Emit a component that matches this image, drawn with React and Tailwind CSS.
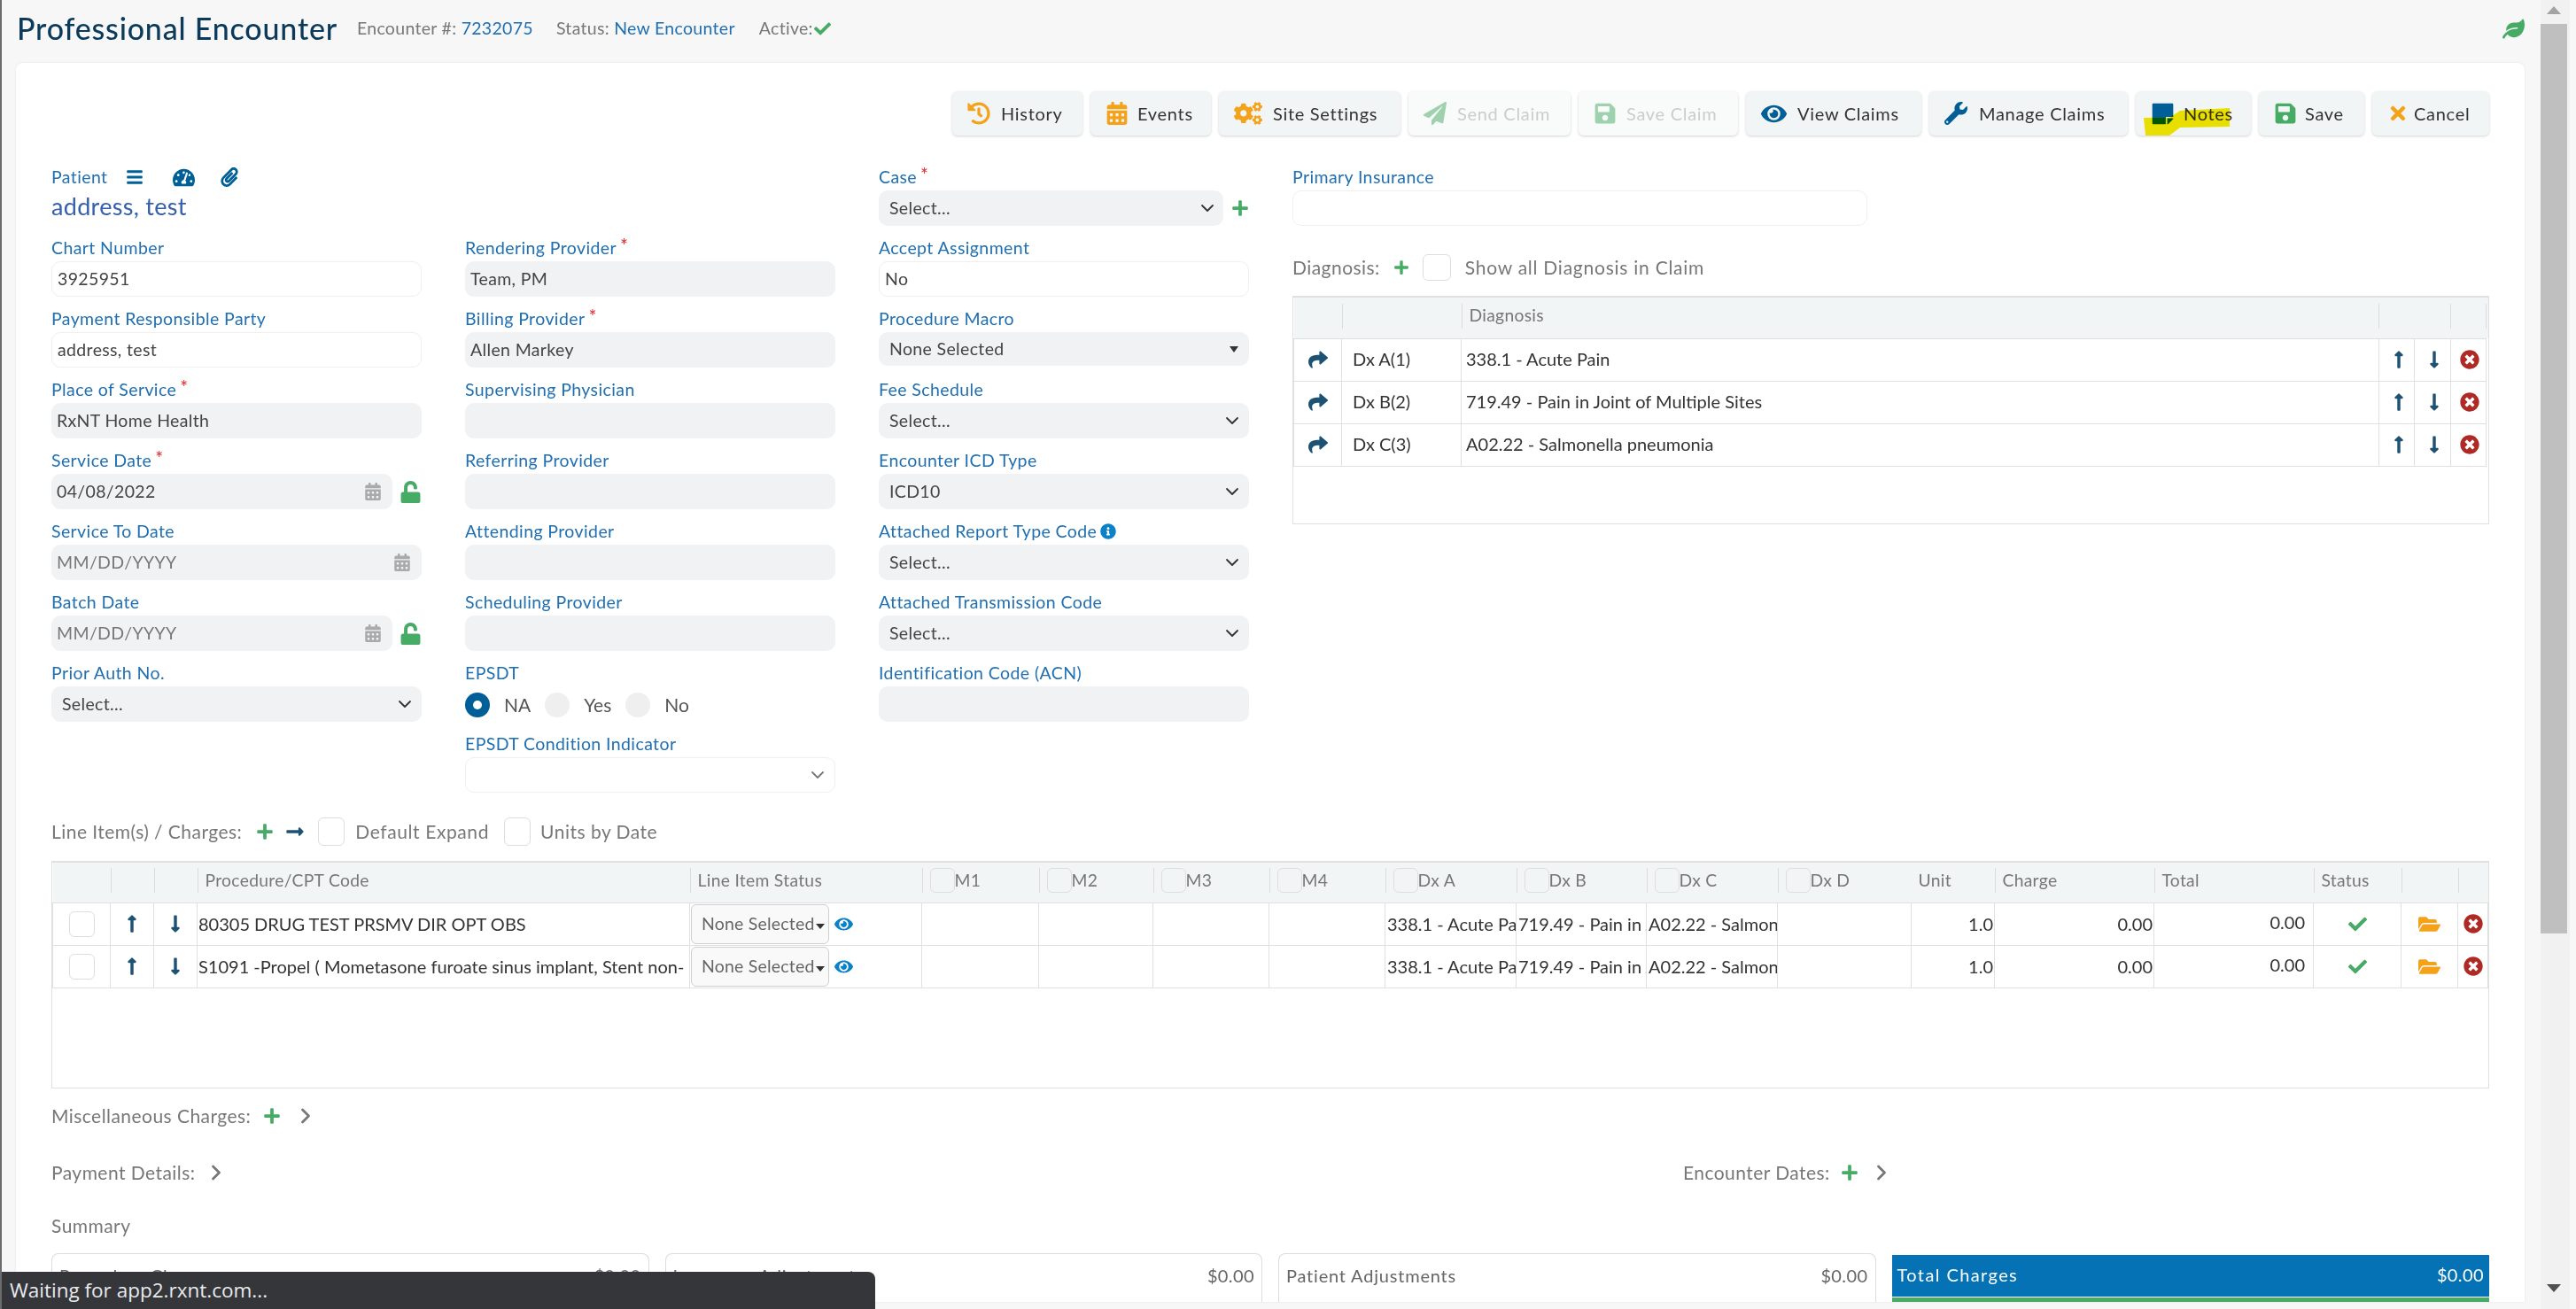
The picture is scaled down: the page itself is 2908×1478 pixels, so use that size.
import {
  FaBars,
  FaCalendarAlt,
  FaCheck,
  FaCogs,
  FaEye,
  FaFolderOpen,
  FaHistory,
  FaInfoCircle,
  FaLeaf,
  FaLongArrowAltDown,
  FaLongArrowAltRight,
  FaLongArrowAltUp,
  FaPaperPlane,
  FaPaperclip,
  FaPlus,
  FaSave,
  FaShare,
  FaStickyNote,
  FaTachometerAlt,
  FaTimes,
  FaTimesCircle,
  FaUnlock,
  FaWrench,
} from "react-icons/fa";
import { ChevronDown, ChevronRight } from "lucide-react";

const toolbar = [
  { label: "History", icon: FaHistory, color: "text-[#f5a21b]", width: "w-[147px]", size: 26, gap: "gap-[12px]" },
  { label: "Events", icon: FaCalendarAlt, color: "text-[#f5a21b]", width: "w-[136px]", size: 26, gap: "gap-[10px]" },
  { label: "Site Settings", icon: FaCogs, color: "text-[#f5a21b]", width: "w-[205px]", size: 32, gap: "gap-[12px]" },
  { label: "Send Claim", icon: FaPaperPlane, color: "text-[#46ab64]", width: "w-[183px]", size: 26, gap: "gap-[12px]", disabled: true },
  { label: "Save Claim", icon: FaSave, color: "text-[#46ab64]", width: "w-[180px]", size: 26, gap: "gap-[11px]", disabled: true },
  { label: "View Claims", icon: FaEye, color: "text-[#005f96]", width: "w-[198px]", size: 29, gap: "gap-[12px]" },
  { label: "Manage Claims", icon: FaWrench, color: "text-[#005f96]", width: "w-[224px]", size: 26, gap: "gap-[13px]" },
  { label: "Notes", icon: FaStickyNote, color: "text-[#005f96]", width: "w-[130px]", size: 27, gap: "gap-[10px]", marker: true },
  { label: "Save", icon: FaSave, color: "text-[#46ab64]", width: "w-[119px]", size: 26, gap: "gap-[9px]" },
  { label: "Cancel", icon: FaTimes, color: "text-[#f5a21b]", width: "w-[132px]", size: 24, gap: "gap-[6px]" },
];

const lineCols = [65, 49, 49, 556, 262, 132, 129, 131, 131, 148, 147, 148, 151, 94, 180, 180, 99, 64, 34];

const lineHead = [
  { text: "", noLine: true },
  { text: "" },
  { text: "" },
  { text: "Procedure/CPT Code" },
  { text: "Line Item Status" },
  { text: "M1", box: true },
  { text: "M2", box: true },
  { text: "M3", box: true },
  { text: "M4", box: true },
  { text: "Dx A", box: true },
  { text: "Dx B", box: true },
  { text: "Dx C", box: true },
  { text: "Dx D", box: true },
  { text: "Unit", noLine: true },
  { text: "Charge" },
  { text: "Total" },
  { text: "Status" },
  { text: "" },
  { text: "" },
];

const lines = [
  { code: "80305 DRUG TEST PRSMV DIR OPT OBS" },
  { code: "S1091 -Propel ( Mometasone furoate sinus implant, Stent non-" },
];

const diagnoses = [
  { dx: "Dx A(1)", name: "338.1 - Acute Pain" },
  { dx: "Dx B(2)", name: "719.49 - Pain in Joint of Multiple Sites" },
  { dx: "Dx C(3)", name: "A02.22 - Salmonella pneumonia" },
];

const Required = () => <span className="ml-1 align-[2px] text-[21px] leading-none text-[#e8262a]">*</span>;

const Label = ({ text, required, children }) => (
  <div className="flex h-10 items-end pb-px">
    <span className="h-7 text-[19.5px] leading-7 tracking-[0.4px] whitespace-nowrap text-[#1f6fb2]">
      {text}
      {required && <Required />}
      {children}
    </span>
  </div>
);

const Box = ({ value, filled, placeholder, h = "h-10", width = "w-full", children }) => (
  <div
    className={`${h} ${width} flex items-center rounded-[10px] pl-1.5 text-[19.5px] tracking-[0.35px] ${
      filled ? "bg-[#f1f2f4]" : "border border-[#efefef] bg-white"
    } ${placeholder ? "text-[#777]" : "text-[#444]"}`}
  >
    {value}
    {children}
  </div>
);

const Field = ({ label, required, value, filled, placeholder }) => (
  <div>
    <Label text={label} required={required} />
    <Box value={value} filled={filled} placeholder={placeholder} />
  </div>
);

const Select = ({ label, required, value, filled = true }) => (
  <div>
    <Label text={label} required={required} />
    <div
      className={`flex h-10 w-full items-center rounded-[10px] pr-[7px] pl-[12px] text-[19.5px] tracking-[0.35px] text-[#444] ${
        filled ? "bg-[#f1f2f4]" : "border border-[#efefef] bg-white"
      }`}
    >
      {value}
      <ChevronDown size={24} strokeWidth={1.8} className={`ml-auto ${filled ? "text-[#333]" : "text-[#777]"}`} />
    </div>
  </div>
);

const DateField = ({ label, required, value, locked }) => (
  <div>
    <Label text={label} required={required} />
    <div className="flex h-10 items-center">
      <div
        className={`flex h-10 flex-1 items-center justify-between rounded-[10px] bg-[#f1f2f4] pr-[12px] pl-1.5 text-[19.5px] tracking-[0.35px] ${
          value ? "text-[#444]" : "text-[#777]"
        }`}
      >
        {value || "MM/DD/YYYY"}
        <FaCalendarAlt size={20} className="text-[#aaa]" />
      </div>
      {locked && <FaUnlock size={25} className="ml-[8px] text-[#46ab64]" />}
    </div>
  </div>
);

const Radio = ({ label, checked }) => (
  <div className="flex items-center gap-[16px]">
    <span
      className={`flex h-7 w-7 items-center justify-center rounded-full ${
        checked ? "bg-[#005f96]" : "bg-[#efefef]"
      }`}
    >
      {checked && <span className="h-2.5 w-2.5 rounded-full bg-white" />}
    </span>
    <span className="text-[21px] text-[#555]">{label}</span>
  </div>
);

const CheckBox = ({ className }) => (
  <span className={`block shrink-0 rounded-[6px] border border-[#dedede] bg-transparent ${className}`} />
);

const ToolbarButton = ({ item }) => {
  const Icon = item.icon;
  return (
    <button
      className={`relative flex h-[50px] items-center rounded-[6px] pl-[17px] text-[20px] tracking-[0.7px] shadow-[0_1px_3px_rgba(0,0,0,0.18)] ${item.width} ${item.gap} ${
        item.disabled ? "bg-[#f9fafa] text-[#ccc]" : "bg-[#f2f5f6] text-[#333]"
      }`}
    >
      <Icon size={item.size} className={`shrink-0 ${item.color} ${item.disabled ? "opacity-50" : ""}`} />
      {item.label}
      {item.marker && (
        // the yellow highlighter stroke somebody drew over the screenshot
        <svg
          viewBox="0 0 100 32"
          className="absolute top-[19px] left-[8px] h-[32px] w-[100px] mix-blend-multiply"
        >
          <path d="M42 3 L98 0 L98 21 L42 22 L30 31 L3 31 L1 11 L30 11 Z" fill="#f5e900" />
        </svg>
      )}
    </button>
  );
};

const HeadCell = ({ cell }) => (
  <th className="p-0 pb-1 text-left font-normal">
    <div
      className={`flex h-7 items-center text-[19.3px] tracking-[0.3px] whitespace-nowrap text-[#777] ${
        cell.noLine ? "" : "border-l border-[#dcdcdc]"
      } ${cell.box ? "pl-2" : "pl-[8px]"}`}
    >
      {cell.box && <CheckBox className="h-7 w-7" />}
      {cell.text}
    </div>
  </th>
);

const DxText = ({ children }) => (
  <td className="overflow-hidden border border-[#e0e0e0] pl-0.5 text-[20px] whitespace-nowrap text-[#333]">
    {children}
  </td>
);

const Num = ({ children }) => (
  <td className="border border-[#e0e0e0] pr-px text-right text-[20px] text-[#333]">{children}</td>
);

const LineRow = ({ line }) => (
  <tr className="h-12">
    <td className="border border-[#e0e0e0]">
      <CheckBox className="mx-auto h-[29px] w-[29px]" />
    </td>
    <td className="border border-[#e0e0e0]">
      <FaLongArrowAltUp size={22} className="mx-auto text-[#1d5273]" />
    </td>
    <td className="border border-[#e0e0e0]">
      <FaLongArrowAltDown size={22} className="mx-auto text-[#1d5273]" />
    </td>
    <td className="overflow-hidden border border-[#e0e0e0] pl-px text-[20px] whitespace-nowrap text-[#333]">
      {line.code}
    </td>
    <td className="border border-[#e0e0e0] pl-px">
      <div className="flex items-center gap-[6px]">
        <div className="flex h-[45px] w-[156px] items-center rounded-[6px] border border-[#cfcfcf] bg-[#f9f9f9] pl-[11px] text-[19.5px] tracking-[0.2px] whitespace-nowrap text-[#666]">
          None Selected
          <span className="mt-1.5 ml-px border-x-[5px] border-t-[6px] border-x-transparent border-t-[#333]" />
        </div>
        <FaEye size={21} className="text-[#0b82c8]" />
      </div>
    </td>
    <td className="border border-[#e0e0e0]" />
    <td className="border border-[#e0e0e0]" />
    <td className="border border-[#e0e0e0]" />
    <td className="border border-[#e0e0e0]" />
    <DxText>338.1 - Acute Pain</DxText>
    <DxText>719.49 - Pain in Joint</DxText>
    <DxText>A02.22 - Salmonella pneumonia</DxText>
    <td className="border border-[#e0e0e0]" />
    <Num>1.0</Num>
    <Num>0.00</Num>
    <td className="border border-[#e0e0e0] pr-[9px] pb-1 text-right text-[20px] text-[#333]">0.00</td>
    <td className="border border-[#e0e0e0]">
      <FaCheck size={21} className="mx-auto text-[#46ab64]" />
    </td>
    <td className="border border-[#e0e0e0]">
      <FaFolderOpen size={25} className="mx-auto text-[#f5a21b]" />
    </td>
    <td className="border border-[#e0e0e0]">
      <FaTimesCircle size={22} className="mx-auto text-[#b02a25]" />
    </td>
  </tr>
);

const LineItems = () => (
  <div className="h-[257px] border border-t-2 border-[#e0e0e0]">
    <table className="w-[2749px] table-fixed border-collapse">
      <colgroup>
        {lineCols.map((w, i) => (
          <col key={i} style={{ width: w }} />
        ))}
      </colgroup>
      <thead>
        <tr className="h-[45px] bg-[#f2f5f6]">
          {lineHead.map((cell, i) => (
            <HeadCell key={i} cell={cell} />
          ))}
        </tr>
      </thead>
      <tbody>
        {lines.map((line) => (
          <LineRow key={line.code} line={line} />
        ))}
      </tbody>
    </table>
  </div>
);

const DiagnosisTable = () => (
  <div className="mt-[17px] h-[258px] border border-t-2 border-[#e0e0e0]">
    <table className="w-full table-fixed border-collapse">
      <colgroup>
        <col className="w-[54px]" />
        <col className="w-[135px]" />
        <col />
        <col className="w-[40px]" />
        <col className="w-[41px]" />
        <col className="w-[40px]" />
        <col className="w-[3px]" />
      </colgroup>
      <thead>
        <tr className="h-[46px] bg-[#f2f5f6]">
          <HeadCell cell={{ text: "", noLine: true }} />
          <HeadCell cell={{ text: "" }} />
          <HeadCell cell={{ text: "Diagnosis" }} />
          <HeadCell cell={{ text: "" }} />
          <HeadCell cell={{ text: "", noLine: true }} />
          <HeadCell cell={{ text: "" }} />
          <HeadCell cell={{ text: "" }} />
        </tr>
      </thead>
      <tbody>
        {diagnoses.map((row) => (
          <tr key={row.dx} className="h-12 text-[20px] text-[#333]">
            <td className="border border-[#e0e0e0]">
              <FaShare size={22} className="mx-auto text-[#1d5273]" />
            </td>
            <td className="border border-[#e0e0e0] pb-0.5 pl-[12px]">{row.dx}</td>
            <td className="border border-[#e0e0e0] pb-0.5 pl-[5px]">{row.name}</td>
            <td className="border border-[#e0e0e0] pl-[5px]">
              <FaLongArrowAltUp size={22} className="mx-auto text-[#1d5273]" />
            </td>
            <td className="border border-[#e0e0e0] pl-[5px]">
              <FaLongArrowAltDown size={22} className="mx-auto text-[#1d5273]" />
            </td>
            <td className="border border-[#e0e0e0] pl-[3px]">
              <FaTimesCircle size={22} className="mx-auto text-[#b02a25]" />
            </td>
            <td />
          </tr>
        ))}
      </tbody>
    </table>
  </div>
);

const SummaryCard = ({ label, className }) => (
  <div className="flex h-[60px] items-start justify-between rounded-t-[8px] border border-b-0 border-[#dcdcdc] px-[8px] pt-[9px] text-[20px] tracking-[0.8px] text-[#666]">
    <span className={className}>{label}</span>
    <span className="tracking-[0.4px]">$0.00</span>
  </div>
);

const Section = ({ text }) => (
  <span className="text-[21px] tracking-[0.45px] whitespace-nowrap text-[#777]">{text}</span>
);

const Chevron = () => <ChevronRight size={28} strokeWidth={2.4} className="text-[#777]" />;

const App = () => {
  return (
    <div className="relative flex h-[1478px] w-[2908px] overflow-hidden border-l-2 border-[#6b6b6b] bg-[#f7f7f8] [font-family:Lato,sans-serif]">
      <main className="flex-1">
        <header className="flex h-[71px] items-center pr-[18px] pb-[7px] pl-[17px]">
          <h1 className="text-[34px] leading-none font-medium tracking-[0.8px] whitespace-nowrap text-[#0b3a5a]">
            Professional Encounter
          </h1>
          <span className="ml-[22px] text-[19.5px] tracking-[0.3px] text-[#777]">
            Encounter #: <span className="text-[#1f6fb2]">7232075</span>
          </span>
          <span className="ml-[26px] text-[19.5px] tracking-[0.3px] text-[#777]">
            Status: <span className="text-[#1f6fb2]">New Encounter</span>
          </span>
          <span className="ml-[27px] flex items-center gap-[1px] text-[19.5px] tracking-[0.3px] text-[#777]">
            Active:
            <FaCheck size={19} className="text-[#46ab64]" />
          </span>
          <FaLeaf size={25} className="ml-auto text-[#46ab64]" />
        </header>

        <section className="mr-[18px] ml-[16px] h-[1399px] overflow-hidden rounded-t-[8px] bg-white px-10 pt-8 shadow-[0_0_3px_rgba(0,0,0,0.08)]">
          <div className="flex justify-end gap-[9px]">
            {toolbar.map((item) => (
              <ToolbarButton key={item.label} item={item} />
            ))}
          </div>

          <div className="mt-[22px] grid h-[720px] grid-cols-[418px_418px_418px_1fr] gap-x-[49px]">
            <div>
              <div className="h-20">
                <div className="flex h-10 items-end pb-px">
                  <div className="flex h-[28px] items-center text-[19.5px] tracking-[0.4px] text-[#1f6fb2]">
                    Patient
                    <FaBars size={20} className="ml-[21px] text-[#005f96]" />
                    <FaTachometerAlt size={25} className="ml-[33px] text-[#005f96]" />
                    <FaPaperclip size={22} className="ml-[28px] text-[#005f96]" />
                  </div>
                </div>
                <div className="flex h-10 items-center pb-1 text-[27px] tracking-[0.3px] text-[#3460ad]">
                  address, test
                </div>
              </div>
              <Field label="Chart Number" value="3925951" />
              <Field label="Payment Responsible Party" value="address, test" />
              <Field label="Place of Service" required value="RxNT Home Health" filled />
              <DateField label="Service Date" required value="04/08/2022" locked />
              <DateField label="Service To Date" />
              <DateField label="Batch Date" locked />
              <Select label="Prior Auth No." value="Select..." />
            </div>

            <div className="pt-20">
              <Field label="Rendering Provider" required value="Team, PM" filled />
              <Field label="Billing Provider" required value="Allen Markey" filled />
              <Field label="Supervising Physician" filled />
              <Field label="Referring Provider" filled />
              <Field label="Attending Provider" filled />
              <Field label="Scheduling Provider" filled />
              <Label text="EPSDT" />
              <div className="flex h-[42px] items-center gap-[16px]">
                <Radio label="NA" checked />
                <Radio label="Yes" />
                <Radio label="No" />
              </div>
              <div className="-mt-0.5">
                <Select label="EPSDT Condition Indicator" filled={false} />
              </div>
            </div>

            <div>
              <div>
                <Label text="Case" required />
                <div className="flex h-10 items-center justify-between">
                  <div className="flex h-10 w-[389px] items-center justify-between rounded-[10px] bg-[#f1f2f4] pr-[6px] pl-[12px] text-[19.5px] tracking-[0.35px] text-[#444]">
                    Select...
                    <ChevronDown size={24} strokeWidth={1.8} className="text-[#333]" />
                  </div>
                  <FaPlus size={20} className="text-[#46ab64]" />
                </div>
              </div>
              <Field label="Accept Assignment" value="No" />
              <div className="h-20">
                <Label text="Procedure Macro" />
                <div className="flex h-[38px] items-center justify-between rounded-[10px] bg-[#f1f2f4] pr-3 pl-[12px] text-[19.5px] tracking-[0.35px] text-[#444]">
                  None Selected
                  <span className="border-x-[5px] border-t-[7px] border-x-transparent border-t-[#333]" />
                </div>
              </div>
              <Select label="Fee Schedule" value="Select..." />
              <Select label="Encounter ICD Type" value="ICD10" />
              <div>
                <Label text="Attached Report Type Code">
                  <FaInfoCircle size={18} className="ml-1 inline-block align-[-2px] text-[#0b82c8]" />
                </Label>
                <div className="flex h-10 items-center justify-between rounded-[10px] bg-[#f1f2f4] pr-[7px] pl-[12px] text-[19.5px] tracking-[0.35px] text-[#444]">
                  Select...
                  <ChevronDown size={24} strokeWidth={1.8} className="text-[#333]" />
                </div>
              </div>
              <Select label="Attached Transmission Code" value="Select..." />
              <Field label="Identification Code (ACN)" filled />
            </div>

            <div>
              <div className="w-[649px]">
                <Field label="Primary Insurance" />
              </div>
              <div className="mt-[32px] flex h-[30px] items-center">
                <Section text="Diagnosis:" />
                <FaPlus size={18} className="ml-[15px] text-[#46ab64]" />
                <CheckBox className="ml-[15px] h-[30px] w-8" />
                <span className="ml-4 text-[21px] tracking-[0.75px] text-[#777]">Show all Diagnosis in Claim</span>
              </div>
              <DiagnosisTable />
            </div>
          </div>

          <div className="mt-[28px] flex h-8 items-center">
            <Section text="Line Item(s) / Charges:" />
            <FaPlus size={20} className="ml-4 text-[#46ab64]" />
            <FaLongArrowAltRight size={22} className="ml-[13px] text-[#1d5273]" />
            <CheckBox className="ml-[15px] h-8 w-[30px]" />
            <span className="ml-[12px] text-[21px] tracking-[0.6px] text-[#777]">Default Expand</span>
            <CheckBox className="ml-[17px] h-8 w-[30px]" />
            <span className="ml-[11px] text-[21px] tracking-[0.5px] text-[#777]">Units by Date</span>
          </div>

          <div className="mt-[17px]">
            <LineItems />
          </div>

          <div className="mt-4 flex h-[30px] items-center gap-[14px]">
            <Section text="Miscellaneous Charges:" />
            <FaPlus size={20} className="text-[#46ab64]" />
            <Chevron />
          </div>

          <div className="mt-[33px] grid h-[30px] grid-cols-[1842px_1fr] items-center">
            <div className="flex items-center gap-2.5">
              <Section text="Payment Details:" />
              <Chevron />
            </div>
            <div className="flex items-center gap-[12px]">
              <Section text="Encounter Dates:" />
              <FaPlus size={20} className="text-[#46ab64]" />
              <Chevron />
            </div>
          </div>

          <div className="mt-[31px] flex h-[30px] items-center">
            <Section text="Summary" />
          </div>

          <div className="mt-4 grid grid-cols-4 gap-x-[18px]">
            <SummaryCard label="Procedure Charges" />
            <SummaryCard label="Insurance Adjustments" />
            <SummaryCard label="Patient Adjustments" />
            <div className="h-[60px] pt-0.5">
              <div className="flex h-[47px] items-center justify-between bg-[#0472b4] px-[6px] pb-1 text-[20px] tracking-[1.4px] text-white">
                Total Charges
                <span className="tracking-[0.4px]">$0.00</span>
              </div>
              <div className="mt-px h-2 bg-[#46ab64]" />
            </div>
          </div>
        </section>
      </main>

      <aside className="relative mr-[7px] w-[33px] bg-[#f1f1f1]">
        <span className="absolute top-[7px] left-[7px] border-x-[8px] border-b-[9px] border-x-transparent border-b-[#a3a3a3]" />
        <div className="mt-[27px] h-[1027px] w-[30px] bg-[#bfbfbf]" />
        <span className="absolute top-[1450px] left-[7px] border-x-[8px] border-t-[9px] border-x-transparent border-t-[#505050]" />
      </aside>

      <div className="absolute bottom-0 -left-0.5 flex h-[42px] w-[988px] items-center rounded-tr-[8px] bg-[#35363a] pl-[11px] text-[22.5px] text-[#e8eaed] [font-family:'Open_Sans',sans-serif]">
        Waiting for app2.rxnt.com...
      </div>
    </div>
  );
};

export default App;
